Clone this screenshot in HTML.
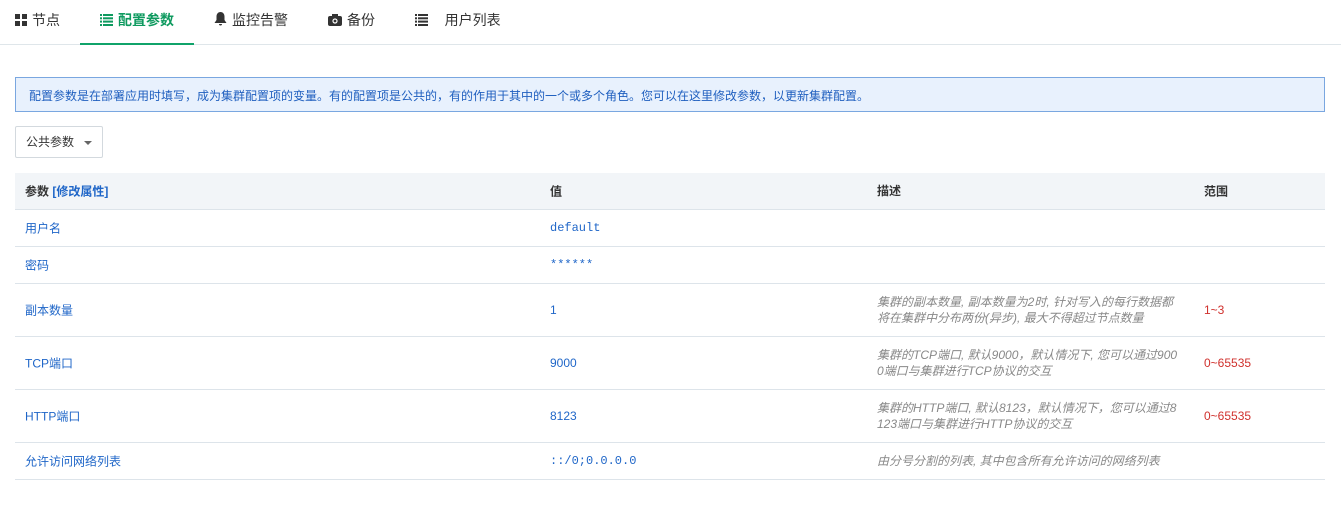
<!DOCTYPE html>
<html><head><meta charset="utf-8"><style>
body{margin:0;width:1341px;height:508px;background:#fff;font-family:"Liberation Sans","Noto Sans CJK SC",sans-serif;color:#333;overflow:hidden;position:relative}
.tabs{position:absolute;left:0;top:0;width:1341px;height:44px;border-bottom:1px solid #dfe6ea}
.tab{position:absolute;top:0;height:44px;line-height:40px;font-size:14px;color:#333;white-space:nowrap}
.tab svg{vertical-align:-1px;margin-right:5px}
.act{color:#0e9a5f;font-weight:bold}
.ul{position:absolute;left:80px;top:43px;width:114px;height:2px;background:#10a36a}
.info{position:absolute;left:15px;top:77px;height:35px;border:1px solid #7aa7e0;background:#e8f1fd;color:#1f5fbf;font-size:12px;line-height:36px;padding-left:13px;box-sizing:border-box;width:1310px}
.sel{position:absolute;left:15px;top:126px;width:88px;height:32px;border:1px solid #d3d9de;border-radius:2px;box-sizing:border-box;font-size:12px;line-height:30px;padding-left:10px;color:#333}
.sel:after{content:"";position:absolute;right:10px;top:14px;border:4px solid transparent;border-top:4px solid #666}
.row{position:absolute;left:15px;width:1310px;border-bottom:1px solid #dde4ea;font-size:12px}
.row div{position:absolute;top:50%;transform:translateY(-50%)}
.h{background:#f2f5f8;font-weight:bold;color:#333}
.c1{left:10px;color:#1f66c8}
.h .c1{color:#333}
.c2{left:535px;color:#1f66c8;font-family:"Liberation Mono",monospace}
.s{font-family:"Liberation Sans",sans-serif}
.c3{left:862px;color:#888;font-style:italic;line-height:16px;width:306px;word-break:break-all}
.c4{left:1189px;color:#d0312d}
</style></head><body>
<div class="tabs">
<div class="tab" style="left:15px"><svg width="12" height="12"><rect x="0" y="0" width="5" height="5" fill="#333"/><rect x="7" y="0" width="5" height="5" fill="#333"/><rect x="0" y="7" width="5" height="5" fill="#333"/><rect x="7" y="7" width="5" height="5" fill="#333"/></svg>节点</div>
<div class="tab act" style="left:100px"><svg width="13" height="12" fill="#0e9a5f"><rect x="0" y="0" width="2" height="2"/><rect x="3" y="0" width="10" height="2"/><rect x="0" y="3.3" width="2" height="2"/><rect x="3" y="3.3" width="10" height="2"/><rect x="0" y="6.6" width="2" height="2"/><rect x="3" y="6.6" width="10" height="2"/><rect x="0" y="10" width="2" height="2"/><rect x="3" y="10" width="10" height="2"/></svg>配置参数</div>
<div class="tab" style="left:214px"><svg width="13" height="14" fill="#333"><path d="M6.5 0C4 0 2.5 2 2.5 4.5V8L0.5 11H12.5L10.5 8V4.5C10.5 2 9 0 6.5 0Z M5 12H8a1.5 1.5 0 0 1-3 0Z"/></svg>监控告警</div>
<div class="tab" style="left:328px"><svg width="14" height="12"><rect x="0" y="2" width="14" height="10" rx="2" fill="#333"/><rect x="4" y="0" width="6" height="3" fill="#333"/><circle cx="7" cy="7" r="2.6" fill="#fff"/><circle cx="7" cy="7" r="1.4" fill="#333"/></svg>备份</div>
<div class="tab" style="left:415px"><svg width="13" height="12" fill="#333"><rect x="0" y="0" width="2" height="2"/><rect x="3" y="0" width="10" height="2"/><rect x="0" y="3.3" width="2" height="2"/><rect x="3" y="3.3" width="10" height="2"/><rect x="0" y="6.6" width="2" height="2"/><rect x="3" y="6.6" width="10" height="2"/><rect x="0" y="10" width="2" height="2"/><rect x="3" y="10" width="10" height="2"/></svg>&nbsp;&nbsp;&nbsp;用户列表</div>
</div>
<div class="ul"></div>
<div class="info">配置参数是在部署应用时填写，成为集群配置项的变量。有的配置项是公共的，有的作用于其中的一个或多个角色。您可以在这里修改参数，以更新集群配置。</div>
<div class="sel">公共参数</div>
<div class="row h" style="top:173px;height:36px"><div class="c1">参数 <span style="color:#1f66c8">[修改属性]</span></div><div class="c2" style="font-family:inherit;color:#333">值</div><div class="c3" style="font-style:normal;color:#333">描述</div><div class="c4" style="color:#333">范围</div></div>
<div class="row" style="top:210px;height:36px"><div class="c1">用户名</div><div class="c2">default</div></div>
<div class="row" style="top:247px;height:36px"><div class="c1">密码</div><div class="c2">******</div></div>
<div class="row" style="top:284px;height:52px"><div class="c1">副本数量</div><div class="c2 s">1</div><div class="c3">集群的副本数量, 副本数量为2时, 针对写入的每行数据都将在集群中分布两份(异步), 最大不得超过节点数量</div><div class="c4">1~3</div></div>
<div class="row" style="top:337px;height:52px"><div class="c1">TCP端口</div><div class="c2 s">9000</div><div class="c3">集群的TCP端口, 默认9000，默认情况下, 您可以通过9000端口与集群进行TCP协议的交互</div><div class="c4">0~65535</div></div>
<div class="row" style="top:390px;height:52px"><div class="c1">HTTP端口</div><div class="c2 s">8123</div><div class="c3">集群的HTTP端口, 默认8123，默认情况下，您可以通过8123端口与集群进行HTTP协议的交互</div><div class="c4">0~65535</div></div>
<div class="row" style="top:443px;height:36px"><div class="c1">允许访问网络列表</div><div class="c2">::/0;0.0.0.0</div><div class="c3">由分号分割的列表, 其中包含所有允许访问的网络列表</div></div>
</body></html>
